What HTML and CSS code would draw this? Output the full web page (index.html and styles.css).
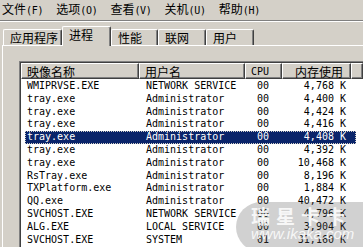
FILE: index.html
```html
<!DOCTYPE html>
<html>
<head>
<meta charset="utf-8">
<link rel="stylesheet" href="styles.css">
</head>
<body>
<div class="win">
  <div class="menubar">
    <span class="mi">文件<span class="acc">(F)</span></span>
    <span class="mi">选项<span class="acc">(O)</span></span>
    <span class="mi">查看<span class="acc">(V)</span></span>
    <span class="mi">关机<span class="acc">(U)</span></span>
    <span class="mi">帮助<span class="acc">(H)</span></span>
  </div>
  <div class="tabs">
    <div class="tab w1">应用程序</div>
    <div class="tab sel">进程</div>
    <div class="tab w3">性能</div>
    <div class="tab w4">联网</div>
    <div class="tab w5">用户</div>
  </div>
  <div class="panel">
    <div class="listbox">
      <div class="head">
        <div class="hc c1">映像名称</div>
        <div class="hc c2">用户名</div>
        <div class="hc c3 lat">CPU</div>
        <div class="hc c4">内存使用</div>
        <div class="hc c5"></div>
      </div>
      <div class="rows">
        <div class="row"><span class="d1">WMIPRVSE.EXE</span><span class="d2">NETWORK SERVICE</span><span class="d3">00</span><span class="d4">4,768 K</span></div>
        <div class="row"><span class="d1">tray.exe</span><span class="d2">Administrator</span><span class="d3">00</span><span class="d4">4,400 K</span></div>
        <div class="row"><span class="d1">tray.exe</span><span class="d2">Administrator</span><span class="d3">00</span><span class="d4">4,424 K</span></div>
        <div class="row"><span class="d1">tray.exe</span><span class="d2">Administrator</span><span class="d3">00</span><span class="d4">4,416 K</span></div>
        <div class="row selrow"><span class="d1">tray.exe</span><span class="d2">Administrator</span><span class="d3">00</span><span class="d4">4,408 K</span></div>
        <div class="row"><span class="d1">tray.exe</span><span class="d2">Administrator</span><span class="d3">00</span><span class="d4">4,392 K</span></div>
        <div class="row"><span class="d1">tray.exe</span><span class="d2">Administrator</span><span class="d3">00</span><span class="d4">10,468 K</span></div>
        <div class="row"><span class="d1">RsTray.exe</span><span class="d2">Administrator</span><span class="d3">00</span><span class="d4">8,196 K</span></div>
        <div class="row"><span class="d1">TXPlatform.exe</span><span class="d2">Administrator</span><span class="d3">00</span><span class="d4">1,884 K</span></div>
        <div class="row"><span class="d1">QQ.exe</span><span class="d2">Administrator</span><span class="d3">00</span><span class="d4">40,472 K</span></div>
        <div class="row"><span class="d1">SVCHOST.EXE</span><span class="d2">NETWORK SERVICE</span><span class="d3">00</span><span class="d4">4,796 K</span></div>
        <div class="row"><span class="d1">ALG.EXE</span><span class="d2">LOCAL SERVICE</span><span class="d3">00</span><span class="d4">3,904 K</span></div>
        <div class="row"><span class="d1">SVCHOST.EXE</span><span class="d2">SYSTEM</span><span class="d3">01</span><span class="d4">31,160 K</span></div>
      </div>
    </div>
  </div>
  <div class="watermark">
    <div class="wm-title">瑞星卡卡</div>
    <div class="wm-url">www.ikaka.com</div>
  </div>
</div>
</body>
</html>
```

FILE: styles.css
```css
html, body {
  margin: 0;
  padding: 0;
}
body {
  width: 363px;
  height: 247px;
  overflow: hidden;
  background: #d4d0c8;
  font-family: "Noto Sans CJK SC", "Liberation Sans", sans-serif;
  font-size: 12px;
  color: #000;
}
.win {
  position: relative;
  width: 363px;
  height: 247px;
  overflow: hidden;
}
.menubar {
  height: 20px;
  display: flex;
  align-items: center;
  padding-left: 2px;
  gap: 13px;
  border-bottom: 1px solid #808080;
  box-shadow: 0 1px 0 #ffffff;
  line-height: 20px;
}
.mi {
  white-space: nowrap;
}
.acc {
  font-family: "DejaVu Sans Mono", monospace;
  font-size: 10px;
  letter-spacing: -0.3px;
}
.tabs {
  display: flex;
  align-items: flex-end;
  height: 24px;
  padding-left: 3px;
  position: relative;
  z-index: 2;
}
.tab {
  height: 16px;
  box-sizing: border-box;
  padding-left: 6px;
  line-height: 15px;
  border-top: 1px solid #ffffff;
  border-left: 1px solid #ffffff;
  border-right: 1px solid #404040;
  box-shadow: inset -1px 0 0 #808080;
  border-radius: 2px 2px 0 0;
  background: #d4d0c8;
}
.w1 { width: 59px; }
.w3 { width: 47px; }
.w4 { width: 48px; }
.w5 { width: 48px; }
.tab.sel {
  width: 49px;
  height: 20px;
  line-height: 16px;
  margin-bottom: -1px;
  position: relative;
}
.panel {
  border-top: 1px solid #ffffff;
  border-left: 1px solid #ffffff;
  margin-left: 2px;
  height: 200px;
  padding-top: 15px;
  padding-left: 16px;
  position: relative;
  z-index: 1;
}
.listbox {
  border-top: 1px solid #808080;
  border-left: 1px solid #808080;
  box-shadow: inset 1px 1px 0 #404040;
  padding: 1px 0 0 1px;
  background: #ffffff;
  height: 190px;
}
.head {
  display: flex;
  height: 16px;
  background: #d4d0c8;
}
.hc {
  box-sizing: border-box;
  height: 16px;
  line-height: 15px;
  border-top: 1px solid #ffffff;
  border-left: 1px solid #ffffff;
  border-right: 1px solid #404040;
  border-bottom: 1px solid #404040;
  box-shadow: inset -1px -1px 0 #808080;
  padding-left: 5px;
  white-space: nowrap;
}
.c1 { width: 118px; }
.c2 { width: 106px; }
.c3 { width: 37px; padding-left: 5px; }
.c4 { width: 69px; padding-left: 12px; }
.c5 { flex: 1; }
.lat {
  font-family: "DejaVu Sans Mono", monospace;
  font-size: 10px;
}
.rows {
  padding-top: 1px;
  padding-left: 4px;
}
.row {
  display: flex;
  width: 331px;
  height: 12.8px;
  line-height: 12.8px;
  font-family: "DejaVu Sans Mono", "Liberation Mono", monospace;
  font-size: 10px;
  white-space: nowrap;
}
.selrow {
  background: #0a246a;
  color: #ffffff;
  outline: 1px dotted #d4d0c8;
  outline-offset: -1px;
}
.d1 { width: 114px; padding-left: 2px; }
.d2 { width: 102px; padding-left: 5px; }
.d3 { width: 36px; padding-left: 9px; box-sizing: border-box; }
.d4 { width: 62px; text-align: right; }
.watermark {
  position: absolute;
  z-index: 5;
  left: 236px;
  top: 202px;
  width: 140px;
  height: 50px;
  border-radius: 25px 0 0 25px;
  background: rgba(90, 90, 90, 0.28);
  color: rgba(255, 255, 255, 0.85);
  padding-left: 15px;
  padding-top: 3px;
  box-sizing: border-box;
}
.wm-title {
  font-weight: bold;
  font-size: 19px;
  line-height: 21px;
  letter-spacing: 6px;
}
.wm-url {
  font-family: "Liberation Sans", sans-serif;
  font-style: italic;
  font-size: 15px;
  line-height: 15px;
}
```
